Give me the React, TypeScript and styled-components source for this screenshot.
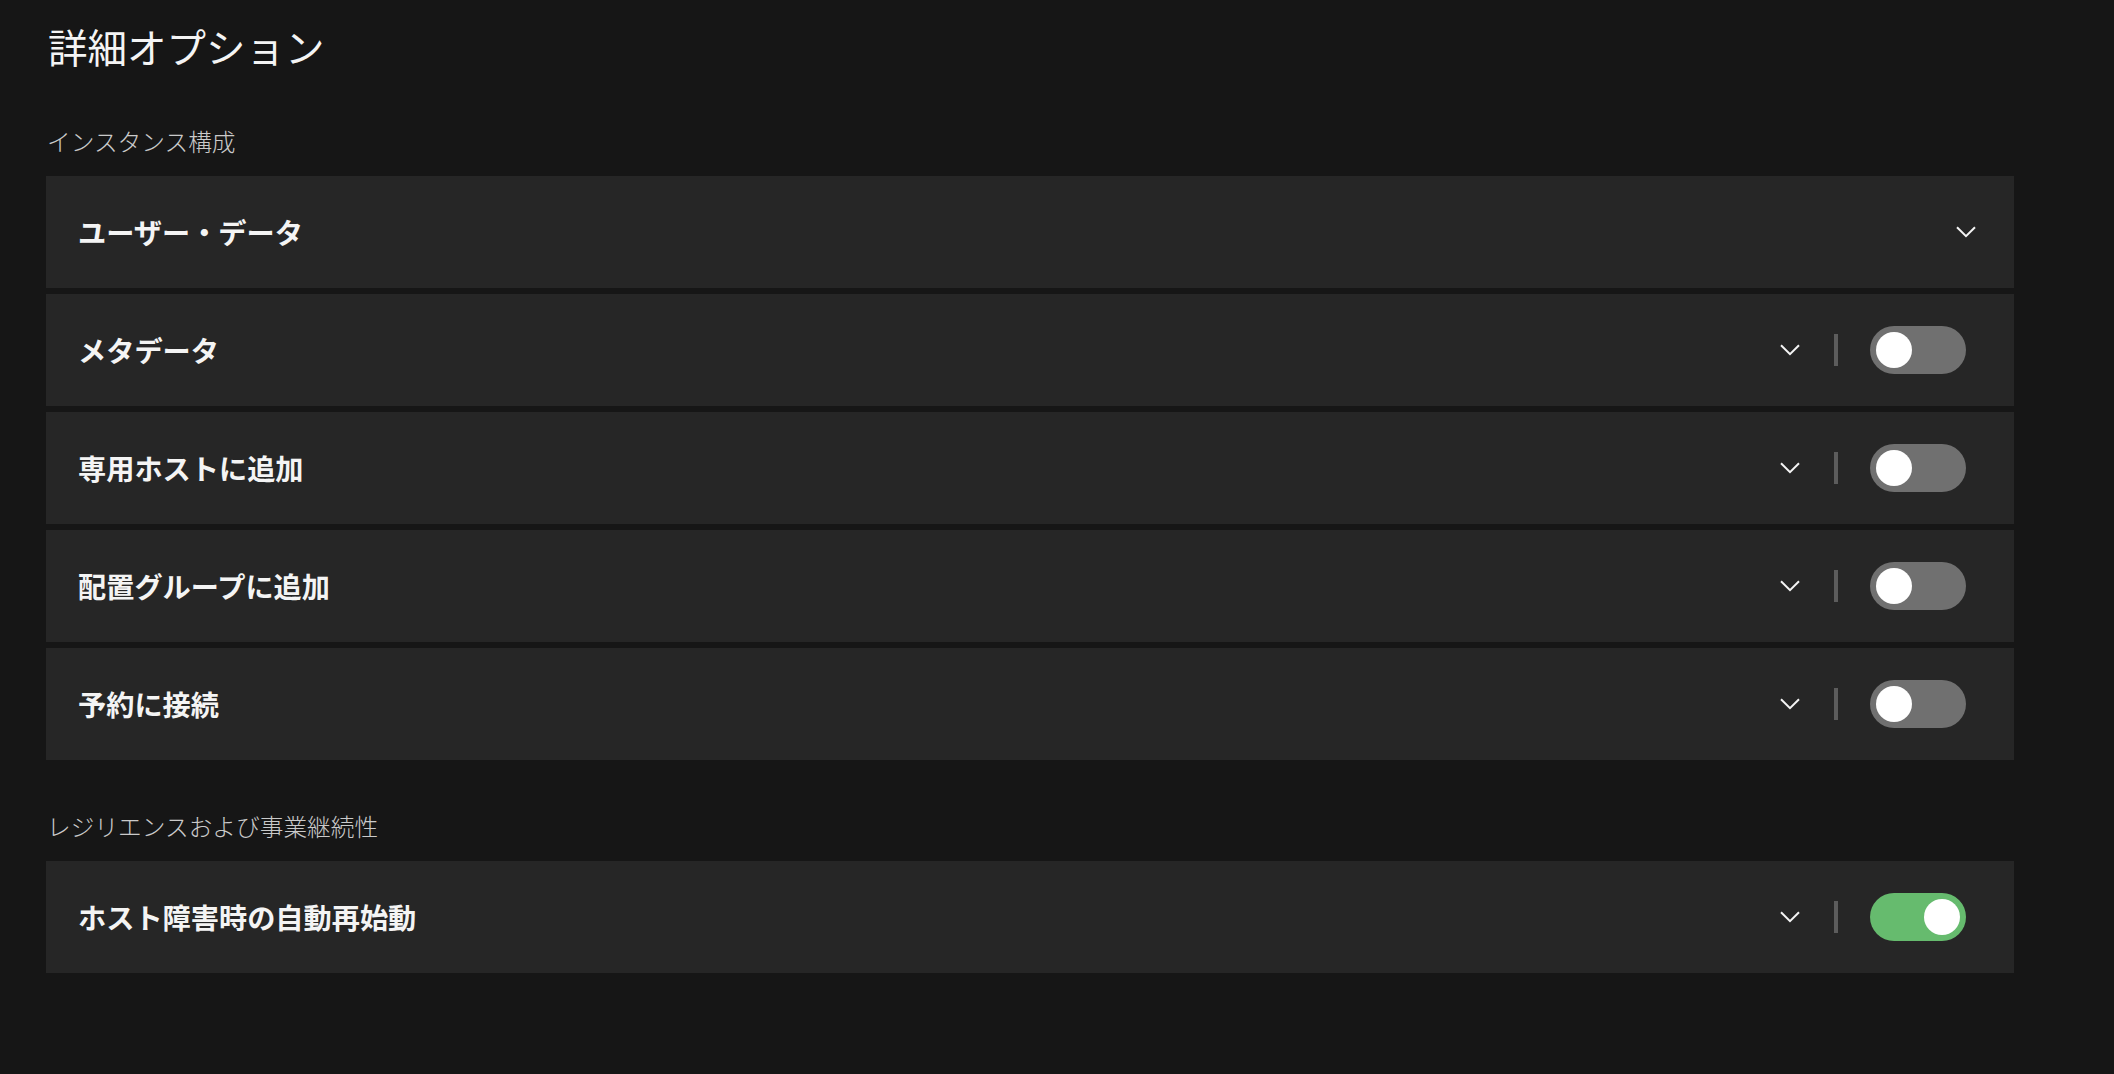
import React from "react";
import styled, { createGlobalStyle } from "styled-components";

const GlobalStyle = createGlobalStyle`
  html, body {
    margin: 0;
    padding: 0;
    background: #161616;
  }
  body {
    font-family: "Noto Sans CJK JP", "Noto Sans", sans-serif;
    color: #f4f4f4;
  }
`;

const Page = styled.div`
  min-height: 1074px;
  box-sizing: border-box;
  padding: 22px 100px 0 46px;
  background: #161616;
`;

const Title = styled.h1`
  margin: 0 0 57px 2px;
  font-size: 39.5px;
  line-height: 48px;
  font-weight: 400;
  letter-spacing: 0;
  color: #f4f4f4;
`;

const Section = styled.section`
  & + & {
    margin-top: 52px;
  }
`;

const SectionLabel = styled.h2`
  margin: 0 0 21px 1px;
  font-size: 23.7px;
  line-height: 28px;
  font-weight: 300;
  letter-spacing: 0;
  color: #cacaca;
`;

const List = styled.div`
  display: flex;
  flex-direction: column;
  gap: 6px;
`;

const Row = styled.div<{ $toggle: boolean }>`
  height: 112px;
  box-sizing: border-box;
  display: flex;
  align-items: center;
  padding: 0 ${(p) => (p.$toggle ? 48 : 38)}px 0 32px;
  background: #262626;
`;

const RowTitle = styled.span`
  flex: 1;
  font-size: 28.2px;
  line-height: 34px;
  font-weight: 700;
  letter-spacing: 0;
  color: #f4f4f4;
`;

const Controls = styled.div`
  display: flex;
  align-items: center;
`;

const ChevronBox = styled.span`
  display: flex;
  align-items: center;
  justify-content: center;
  width: 20px;
  height: 20px;
`;

const Divider = styled.span`
  width: 4px;
  height: 32px;
  background: #5c5c5c;
  margin: 0 32px 0 34px;
`;

const Track = styled.span<{ $on: boolean }>`
  position: relative;
  display: block;
  width: 96px;
  height: 48px;
  border-radius: 24px;
  background: ${(p) => (p.$on ? "#66bb6e" : "#707070")};
`;

const Knob = styled.span<{ $on: boolean }>`
  position: absolute;
  top: 6px;
  left: ${(p) => (p.$on ? 54 : 6)}px;
  width: 36px;
  height: 36px;
  border-radius: 50%;
  background: #ffffff;
`;

const Chevron = () => (
  <ChevronBox>
    <svg width="20" height="12" viewBox="0 0 20 12" fill="none">
      <polyline
        points="1,1.2 10,10.2 19,1.2"
        stroke="#f4f4f4"
        strokeWidth="2"
        strokeLinecap="butt"
        strokeLinejoin="miter"
      />
    </svg>
  </ChevronBox>
);

type Item = { title: string; toggle?: boolean; on?: boolean };

const OptionRow = ({ title, toggle, on }: Item) => (
  <Row $toggle={!!toggle}>
    <RowTitle>{title}</RowTitle>
    <Controls>
      <Chevron />
      {toggle && (
        <>
          <Divider />
          <Track $on={!!on}>
            <Knob $on={!!on} />
          </Track>
        </>
      )}
    </Controls>
  </Row>
);

const sections: { label: string; items: Item[] }[] = [
  {
    label: "インスタンス構成",
    items: [
      { title: "ユーザー・データ" },
      { title: "メタデータ", toggle: true },
      { title: "専用ホストに追加", toggle: true },
      { title: "配置グループに追加", toggle: true },
      { title: "予約に接続", toggle: true },
    ],
  },
  {
    label: "レジリエンスおよび事業継続性",
    items: [{ title: "ホスト障害時の自動再始動", toggle: true, on: true }],
  },
];

export default function App() {
  return (
    <>
      <GlobalStyle />
      <Page>
        <Title>詳細オプション</Title>
        {sections.map((s) => (
          <Section key={s.label}>
            <SectionLabel>{s.label}</SectionLabel>
            <List>
              {s.items.map((it) => (
                <OptionRow key={it.title} {...it} />
              ))}
            </List>
          </Section>
        ))}
      </Page>
    </>
  );
}
